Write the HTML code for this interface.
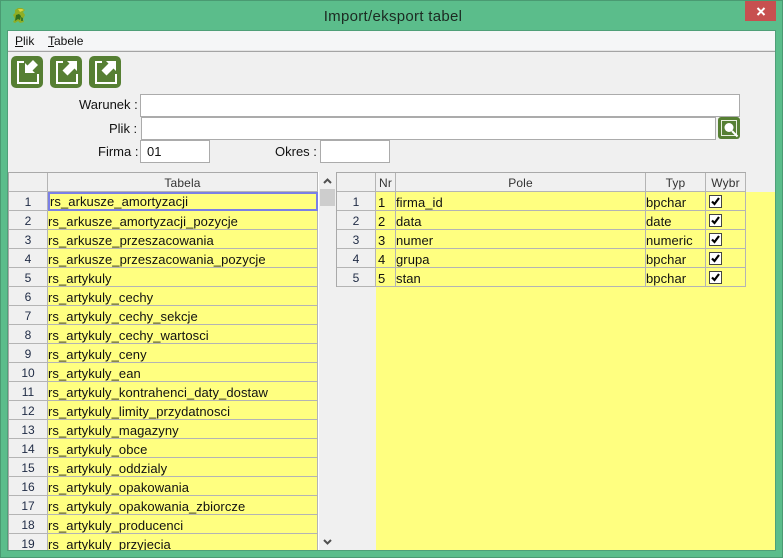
<!DOCTYPE html>
<html>
<head>
<meta charset="utf-8">
<style>
html,body{margin:0;padding:0;width:783px;height:558px;overflow:hidden;background:#5BBD8B;font-family:"Liberation Sans",sans-serif;font-size:12px;color:#111}
div,span,table,td{box-sizing:border-box}
.a{position:absolute}
.t{position:absolute;white-space:nowrap;line-height:14px}
.inp{position:absolute;background:#fff;border:1px solid #ababab;height:23px}
table{position:absolute;border-collapse:separate;border-spacing:0;table-layout:fixed;border-top:1px solid #a9a9a9;border-left:1px solid #a9a9a9;font-size:13px}
td{height:19px;padding:3px 0 0 0;border-right:1px solid #b4b4b4;border-bottom:1px solid #b4b4b4;background:#FFFF80;white-space:nowrap;overflow:hidden;line-height:15px;color:#111;letter-spacing:.07px}
td.h{background:#F0F0F0;text-align:center;color:#1e2a44;font-size:12px;letter-spacing:0}
td.n{padding-left:2px}
tr:first-child td{background:#F0F0F0;text-align:center;padding:2px 0 0 0;color:#333;font-size:12px;letter-spacing:.15px;line-height:16px}
</style>
</head>
<body>
<div class="a" style="left:0;top:0;width:783px;height:1px;background:#4a9a72"></div>
<div class="a" style="left:0;top:557px;width:783px;height:1px;background:#4a9a72"></div>
<div class="a" style="left:0;top:0;width:1px;height:558px;background:#4a9a72"></div>
<div class="a" style="left:782px;top:0;width:1px;height:558px;background:#4a9a72"></div>

<svg class="a" style="left:12px;top:7px" width="15" height="17" viewBox="0 0 15 17"><path d="M3 3L6 1 10 1 13 3 11 5 13 8 11 12 12 15 8 16 6 14 3 16 1 15 3 12 1 8 3 6z" fill="#8fae24"/><path d="M4 8L7 7 9 9 8 13 6 12 3 14z" fill="#2f6f1e"/><path d="M6 2L10 2 12 3 8 5z" fill="#dcd440"/><path d="M9 10L11 11 11 14 9 14z" fill="#3c7a22"/></svg>
<div class="t" style="left:293px;width:200px;top:9px;text-align:center;font-size:15px;line-height:16px;color:#1c2a22;letter-spacing:.3px">Import/eksport tabel</div>
<div class="a" style="left:745px;top:1px;width:31px;height:20px;background:#C75050"></div>
<svg class="a" style="left:756px;top:7px" width="10" height="9" viewBox="0 0 10 9"><path d="M1.500 1L8.500 8M8.500 1L1.500 8" stroke="#fff" stroke-width="2" fill="none"/></svg>

<div class="a" style="left:7px;top:30px;width:769px;height:521px;background:#4f9f78"></div>
<div class="a" style="left:8px;top:31px;width:767px;height:519px;background:#F0F0F0;overflow:hidden"></div>
<div class="a" style="left:8px;top:31px;width:767px;height:19px;background:#F5F6F7"></div>
<div class="a" style="left:8px;top:50px;width:767px;height:1px;background:#e4e4e4"></div>
<div class="a" style="left:8px;top:51px;width:767px;height:1px;background:#a4a4a4"></div>
<div class="t" style="left:15px;top:34px"><u>P</u>lik</div>
<div class="t" style="left:48px;top:34px"><u>T</u>abele</div>

<svg class="a" style="left:11px;top:56px" width="32" height="32" viewBox="0 0 32 32"><rect width="32" height="32" rx="5" fill="#567F33"/><path d="M13 6H7V27H27V18" fill="none" stroke="#fff" stroke-width="2"/><path d="M14 7L16.500 9.500 22 4 27 9 21.500 14.500 24 17H14z" fill="#fff"/></svg>
<svg class="a" style="left:50px;top:56px" width="32" height="32" viewBox="0 0 32 32"><rect width="32" height="32" rx="5" fill="#567F33"/><path d="M13 6H7V27H27V18" fill="none" stroke="#fff" stroke-width="2"/><path d="M27 5H17L19.500 7.500 12.500 14.500 17.500 19.500 24.500 12.500 27 15z" fill="#fff"/></svg>
<svg class="a" style="left:89px;top:56px" width="32" height="32" viewBox="0 0 32 32"><rect width="32" height="32" rx="5" fill="#567F33"/><path d="M13 6H7V27H27V18" fill="none" stroke="#fff" stroke-width="2"/><path d="M27 5H17L19.500 7.500 12.500 14.500 17.500 19.500 24.500 12.500 27 15z" fill="#fff"/></svg>

<div class="t" style="left:79px;top:98px;font-size:13px">Warunek :</div>
<div class="inp" style="left:140px;top:94px;width:600px"></div>
<div class="t" style="left:109px;top:122px;font-size:13px">Plik :</div>
<div class="inp" style="left:141px;top:117px;width:575px"></div>
<svg class="a" style="left:718px;top:117px" width="22" height="22" viewBox="0 0 22 22"><rect width="22" height="22" rx="3" fill="#567F33"/><path d="M3.500 3.500H18.500V18.500H3.500z" fill="none" stroke="#e8efdf" stroke-width="1"/><circle cx="11" cy="10.500" r="4.500" fill="#fff"/><path d="M14 14L19.500 19.500" stroke="#fff" stroke-width="2"/></svg>
<div class="t" style="left:98px;top:145px;font-size:13px">Firma :</div>
<div class="inp" style="left:140px;top:140px;width:70px;padding:3px 0 0 6px;font-size:13px;line-height:15px">01</div>
<div class="t" style="left:275px;top:145px;font-size:13px">Okres :</div>
<div class="inp" style="left:320px;top:140px;width:70px"></div>

<div class="a" style="left:376px;top:192px;width:399px;height:358px;background:#FFFF80"></div>

<div class="a" style="left:0;top:172px;width:330px;height:378px;overflow:hidden">
<table style="left:8px;top:0;width:310px">
<colgroup><col style="width:39px"><col style="width:270px"></colgroup>
<tr><td></td><td>Tabela</td></tr>
<tr><td class="h">1</td><td style="border:2px solid #7B80E6;padding:1px 0 0 0;line-height:14px">rs_arkusze_amortyzacji</td></tr>
<tr><td class="h">2</td><td>rs_arkusze_amortyzacji_pozycje</td></tr>
<tr><td class="h">3</td><td>rs_arkusze_przeszacowania</td></tr>
<tr><td class="h">4</td><td>rs_arkusze_przeszacowania_pozycje</td></tr>
<tr><td class="h">5</td><td>rs_artykuly</td></tr>
<tr><td class="h">6</td><td>rs_artykuly_cechy</td></tr>
<tr><td class="h">7</td><td>rs_artykuly_cechy_sekcje</td></tr>
<tr><td class="h">8</td><td>rs_artykuly_cechy_wartosci</td></tr>
<tr><td class="h">9</td><td>rs_artykuly_ceny</td></tr>
<tr><td class="h">10</td><td>rs_artykuly_ean</td></tr>
<tr><td class="h">11</td><td>rs_artykuly_kontrahenci_daty_dostaw</td></tr>
<tr><td class="h">12</td><td>rs_artykuly_limity_przydatnosci</td></tr>
<tr><td class="h">13</td><td>rs_artykuly_magazyny</td></tr>
<tr><td class="h">14</td><td>rs_artykuly_obce</td></tr>
<tr><td class="h">15</td><td>rs_artykuly_oddzialy</td></tr>
<tr><td class="h">16</td><td>rs_artykuly_opakowania</td></tr>
<tr><td class="h">17</td><td>rs_artykuly_opakowania_zbiorcze</td></tr>
<tr><td class="h">18</td><td>rs_artykuly_producenci</td></tr>
<tr><td class="h">19</td><td>rs_artykuly_przyjecia</td></tr>
<tr><td class="h">20</td><td>rs_artykuly_zamienniki</td></tr>
</table>
</div>

<div class="a" style="left:318px;top:172px;width:1px;height:378px;background:#fff"></div>
<div class="a" style="left:320px;top:189px;width:15px;height:17px;background:#CDCDCD"></div>
<svg class="a" style="left:323px;top:178px" width="9" height="6" viewBox="0 0 9 6"><path d="M1 5L4.500 1.500 8 5" fill="none" stroke="#505050" stroke-width="2"/></svg>
<svg class="a" style="left:323px;top:539px" width="9" height="6" viewBox="0 0 9 6"><path d="M1 1L4.500 4.500 8 1" fill="none" stroke="#505050" stroke-width="2"/></svg>

<table style="left:336px;top:172px;width:410px">
<colgroup><col style="width:39px"><col style="width:20px"><col style="width:250px"><col style="width:60px"><col style="width:40px"></colgroup>
<tr><td></td><td>Nr</td><td>Pole</td><td>Typ</td><td>Wybr</td></tr>
<tr><td class="h">1</td><td class="n">1</td><td>firma_id</td><td>bpchar</td><td></td></tr>
<tr><td class="h">2</td><td class="n">2</td><td>data</td><td>date</td><td></td></tr>
<tr><td class="h">3</td><td class="n">3</td><td>numer</td><td>numeric</td><td></td></tr>
<tr><td class="h">4</td><td class="n">4</td><td>grupa</td><td>bpchar</td><td></td></tr>
<tr><td class="h">5</td><td class="n">5</td><td>stan</td><td>bpchar</td><td></td></tr>
</table>

<svg class="a" style="left:709px;top:195px" width="13" height="13" viewBox="0 0 13 13"><rect x=".5" y=".5" width="12" height="12" fill="#fff" stroke="#444"/><path d="M3 6.500L5.500 9 10 3" fill="none" stroke="#000" stroke-width="2.200"/></svg>
<svg class="a" style="left:709px;top:214px" width="13" height="13" viewBox="0 0 13 13"><rect x=".5" y=".5" width="12" height="12" fill="#fff" stroke="#444"/><path d="M3 6.500L5.500 9 10 3" fill="none" stroke="#000" stroke-width="2.200"/></svg>
<svg class="a" style="left:709px;top:233px" width="13" height="13" viewBox="0 0 13 13"><rect x=".5" y=".5" width="12" height="12" fill="#fff" stroke="#444"/><path d="M3 6.500L5.500 9 10 3" fill="none" stroke="#000" stroke-width="2.200"/></svg>
<svg class="a" style="left:709px;top:252px" width="13" height="13" viewBox="0 0 13 13"><rect x=".5" y=".5" width="12" height="12" fill="#fff" stroke="#444"/><path d="M3 6.500L5.500 9 10 3" fill="none" stroke="#000" stroke-width="2.200"/></svg>
<svg class="a" style="left:709px;top:271px" width="13" height="13" viewBox="0 0 13 13"><rect x=".5" y=".5" width="12" height="12" fill="#fff" stroke="#444"/><path d="M3 6.500L5.500 9 10 3" fill="none" stroke="#000" stroke-width="2.200"/></svg>
</body>
</html>
